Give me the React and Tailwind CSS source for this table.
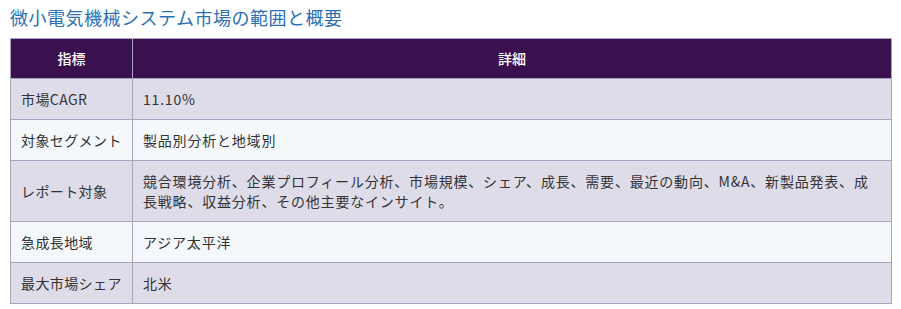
const rows = [
  { label: '市場CAGR', value: '11.10%' },
  { label: '対象セグメント', value: '製品別分析と地域別' },
  {
    label: 'レポート対象',
    value:
      '競合環境分析、企業プロフィール分析、市場規模、シェア、成長、需要、最近の動向、M&A、新製品発表、成長戦略、収益分析、その他主要なインサイト。',
  },
  { label: '急成長地域', value: 'アジア太平洋' },
  { label: '最大市場シェア', value: '北米' },
];

export default function App() {
  return (
    <div
      className="bg-white w-[901px] h-[309px] px-[10px] pt-[4px]"
      style={{ fontFamily: '"Noto Sans CJK JP", "Noto Sans", sans-serif' }}
    >
      <h2 className="text-[18px] leading-[26px] tracking-[0.5px] text-[#2c70b2] mb-[8px]">
        微小電気機械システム市場の範囲と概要
      </h2>
      <table className="w-[882px] table-fixed border-collapse text-[14px] text-[#333]">
        <thead>
          <tr className="bg-[#3a104e] text-white">
            <th className="w-[122px] h-[40px] border border-[#a9a3c0] font-medium">指標</th>
            <th className="h-[40px] border border-[#a9a3c0] font-medium">詳細</th>
          </tr>
        </thead>
        <tbody>
          {rows.map((row, i) => (
            <tr key={row.label} className={i % 2 === 0 ? 'bg-[#dfdcea]' : 'bg-[#f4f8fb]'}>
              <td className="border border-[#a9a3c0] px-[10px] py-[10px] leading-5 tracking-[0.4px] whitespace-nowrap">{row.label}</td>
              <td className="border border-[#a9a3c0] px-[10px] py-[10px] leading-5 tracking-[0.8px]">{row.value}</td>
            </tr>
          ))}
        </tbody>
      </table>
    </div>
  );
}
